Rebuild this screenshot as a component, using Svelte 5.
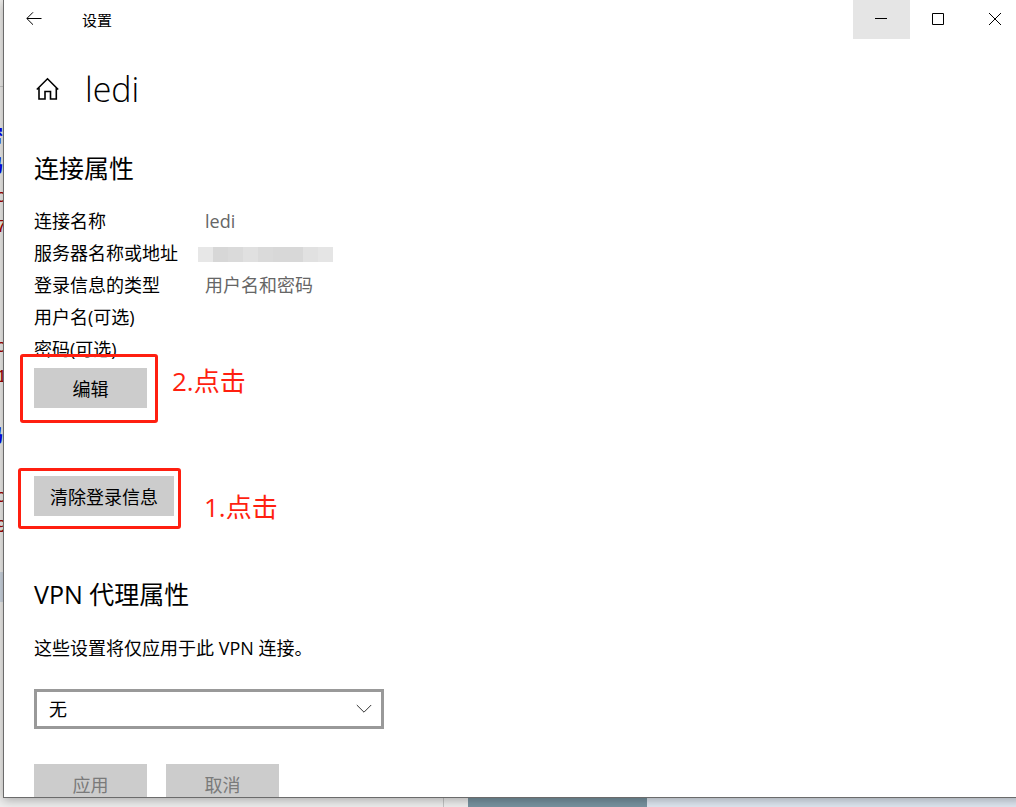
<script lang="ts">
    const title = "设置";
    const connection = "ledi";

    const properties = [
        { label: "连接名称", value: "ledi" },
        { label: "服务器名称或地址", masked: true },
        { label: "登录信息的类型", value: "用户名和密码" },
        { label: "用户名(可选)", value: "" },
        { label: "密码(可选)", value: "" },
    ];

    const mosaic = ["#e7e7e7", "#d7d7d7", "#dadada", "#e0e0e0", "#dadada", "#d8d8d8", "#d8d8d8", "#e1e1e1", "#e5e5e5"];

    // lines of the document that is open behind the window
    const behind = [
        { text: "密", kind: "key" },
        { text: "码", kind: "key" },
        { text: "c", kind: "value" },
        { text: "7", kind: "value" },
        { text: "", kind: "" },
        { text: "", kind: "" },
        { text: "", kind: "" },
        { text: "c", kind: "value" },
        { text: "1", kind: "value" },
        { text: "", kind: "" },
        { text: "码", kind: "key" },
        { text: "", kind: "" },
        { text: "c", kind: "value" },
        { text: "9", kind: "value" },
        { text: "", kind: "" },
        { text: "", kind: "selected" },
    ];

    let proxy = $state("none");
</script>

<div class="desktop">
    <div class="document" aria-hidden="true">
        {#each behind as line}
            <div class="line {line.kind}">{line.text}</div>
        {/each}
    </div>

    <main class="window">
        <header class="title-bar">
            <button class="back" aria-label="返回">
                <svg width="16" height="14" viewBox="0 0 16 14">
                    <path d="M15.5 6.5H1M7 .3L.8 6.5L7 12.7" />
                </svg>
            </button>
            <span class="title">{title}</span>
            <div class="controls">
                <button class="active" aria-label="最小化">
                    <svg width="12" height="12" viewBox="0 0 12 12">
                        <path d="M0 5.5H12" />
                    </svg>
                </button>
                <button aria-label="最大化">
                    <svg width="12" height="12" viewBox="0 0 12 12">
                        <path d="M.5 .5H11.5V11.5H.5Z" />
                    </svg>
                </button>
                <button aria-label="关闭">
                    <svg width="12" height="12" viewBox="0 0 12 12">
                        <path d="M0 0L12 12M12 0L0 12" />
                    </svg>
                </button>
            </div>
        </header>

        <div class="content">
            <div class="page-title">
                <a href="#home" aria-label="主页">
                    <svg width="24" height="24" viewBox="0 0 24 24">
                        <path d="M.8 12.5L11.5 1.8L22.2 12.5M3 11V22H9V14.5H14.5V22H20.3V11" />
                    </svg>
                </a>
                <h1>{connection}</h1>
            </div>

            <h2>连接属性</h2>
            <dl>
                {#each properties as property}
                    <dt>{property.label}</dt>
                    <dd>
                        {#if property.masked}
                            <span class="mosaic">
                                {#each mosaic as shade}
                                    <i style="background: {shade}"></i>
                                {/each}
                            </span>
                        {:else}
                            {property.value}
                        {/if}
                    </dd>
                {/each}
            </dl>

            <div class="step edit">
                <button class="button">编辑</button>
                <span class="frame"></span>
                <span class="note">2.点击</span>
            </div>
            <div class="step clear">
                <button class="button">清除登录信息</button>
                <span class="frame"></span>
                <span class="note">1.点击</span>
            </div>

            <h2>VPN 代理属性</h2>
            <label for="proxy">这些设置将仅应用于此 VPN 连接。</label>
            <div class="select">
                <select id="proxy" bind:value={proxy}>
                    <option value="none">无</option>
                    <option value="auto">自动</option>
                    <option value="manual">手动</option>
                </select>
                <svg width="16" height="10" viewBox="0 0 16 10">
                    <path d="M.8 1L8 8.2L15.2 1" />
                </svg>
            </div>

            <div class="actions">
                <button class="button" disabled>应用</button>
                <button class="button" disabled>取消</button>
            </div>
        </div>
    </main>

    <div class="taskbar" aria-hidden="true">
        <div class="left"></div>
        <div class="gap"></div>
        <div class="photo"></div>
        <div class="right"></div>
    </div>
</div>

<style>
    :global(body) {
        margin: 0;
    }

    .desktop {
        display: grid;
        grid-template-columns: 3px minmax(0, 1fr);
        grid-template-rows: minmax(0, 1fr) 9px;
        height: 100vh;
        overflow: hidden;
        background: #eeedeb;
        color: #000;
        font-family: "Open Sans", "Noto Sans CJK SC", sans-serif;
        font-size: 18px;
    }

    .document {
        padding-top: 35px;
        margin-top: 86px;
        border-top: 1px solid #c8c8c8;
        overflow: hidden;
        font-family: "Liberation Mono", "Noto Sans CJK SC", monospace;
    }

    .line {
        display: flex;
        justify-content: center;
        height: 30px;
        line-height: 30px;
    }

    .key {
        justify-content: flex-end;
        color: #0000f0;
        font-weight: 700;
    }

    .value {
        color: #a00000;
    }

    .selected {
        background: #ccd5e0;
    }

    .window {
        position: relative;
        z-index: 1;
        margin-right: -8px;
        overflow: hidden;
        background: #fff;
        border: 1px solid #6b6b6b;
        border-width: 0 0 1px 1px;
        box-shadow: 0 2px 10px rgba(0, 0, 0, 0.3);
    }

    button {
        padding: 0;
        border: none;
        background: none;
        color: inherit;
        font: inherit;
    }

    svg {
        display: block;
        fill: none;
        stroke: #000;
        stroke-width: 1;
    }

    .title-bar {
        display: flex;
        align-items: center;
        height: 38px;
        font-size: 15px;
    }

    .back {
        width: 58px;
        height: 38px;
        padding-left: 22px;
        margin-right: 20px;
    }

    .controls {
        display: flex;
        align-self: flex-start;
        margin-left: auto;
    }

    .controls button {
        display: grid;
        place-items: center;
        width: 57px;
        height: 39px;
        padding: 0 2px 2px 0;
    }

    .active {
        background: #e5e5e5;
    }

    .content {
        padding: 26px 30px 0;
    }

    .page-title {
        display: flex;
        align-items: center;
        gap: 25px;
        height: 50px;
        padding-left: 2px;
    }

    .page-title svg {
        stroke-width: 1.6;
    }

    h1 {
        margin: 0;
        font-size: 34px;
        font-weight: 300;
        line-height: 50px;
    }

    h2 {
        margin: 0;
        font-size: 25px;
        font-weight: 400;
        line-height: 36px;
    }

    .page-title + h2 {
        margin-top: 36px;
    }

    dl {
        display: grid;
        grid-template-columns: 171px 1fr;
        margin: 19px 0 0;
        line-height: 32px;
    }

    dt,
    dd {
        height: 32px;
        margin: 0;
        white-space: nowrap;
    }

    dd {
        color: #666;
    }

    .mosaic {
        display: flex;
        align-items: flex-end;
        height: 25px;
        margin-left: -7px;
    }

    .mosaic i {
        width: 15px;
        height: 15px;
    }

    .button {
        min-width: 113px;
        height: 40px;
        padding: 0 16px;
        background: #ccc;
    }

    .button:disabled {
        color: #7a7a7a;
    }

    .step {
        position: relative;
        width: fit-content;
        height: 40px;
    }

    .edit {
        margin: 3px 0 68px;
    }

    .clear {
        margin-bottom: 60px;
    }

    .frame {
        position: absolute;
        inset: -14px -11px -15px -14px;
        border: 3px solid #ff1f10;
        border-radius: 3px;
        pointer-events: none;
    }

    .clear .frame {
        inset: -8px -7px -13px -16px;
    }

    .note {
        position: absolute;
        top: -5px;
        left: 100%;
        margin-left: 25px;
        color: #ff1f10;
        font-size: 26px;
        line-height: 36px;
        white-space: nowrap;
    }

    .clear .note {
        top: 13px;
        margin-left: 30px;
    }

    label {
        display: block;
        margin-top: 20px;
        line-height: 32px;
    }

    .select {
        position: relative;
        max-width: 350px;
        margin: 25px 0 35px;
    }

    select {
        display: block;
        box-sizing: border-box;
        width: 100%;
        height: 40px;
        padding: 0 12px;
        border: 3px solid #999;
        border-radius: 0;
        appearance: none;
        background: #fff;
        color: #000;
        font: inherit;
    }

    .select svg {
        position: absolute;
        top: 15px;
        right: 12px;
        stroke: #333;
    }

    .actions {
        display: flex;
        gap: 19px;
    }

    .taskbar {
        display: flex;
        grid-column: 1 / -1;
    }

    .left {
        width: 443px;
        background: #eee;
        border-right: 1px solid #c4c4c4;
    }

    .gap {
        width: 24px;
        background: #eee;
    }

    .photo {
        width: 179px;
        background: #7893a0;
    }

    .right {
        flex: 1;
        background: #dfe7f1;
    }

    .select svg,
    .note {
        pointer-events: none;
    }
</style>
